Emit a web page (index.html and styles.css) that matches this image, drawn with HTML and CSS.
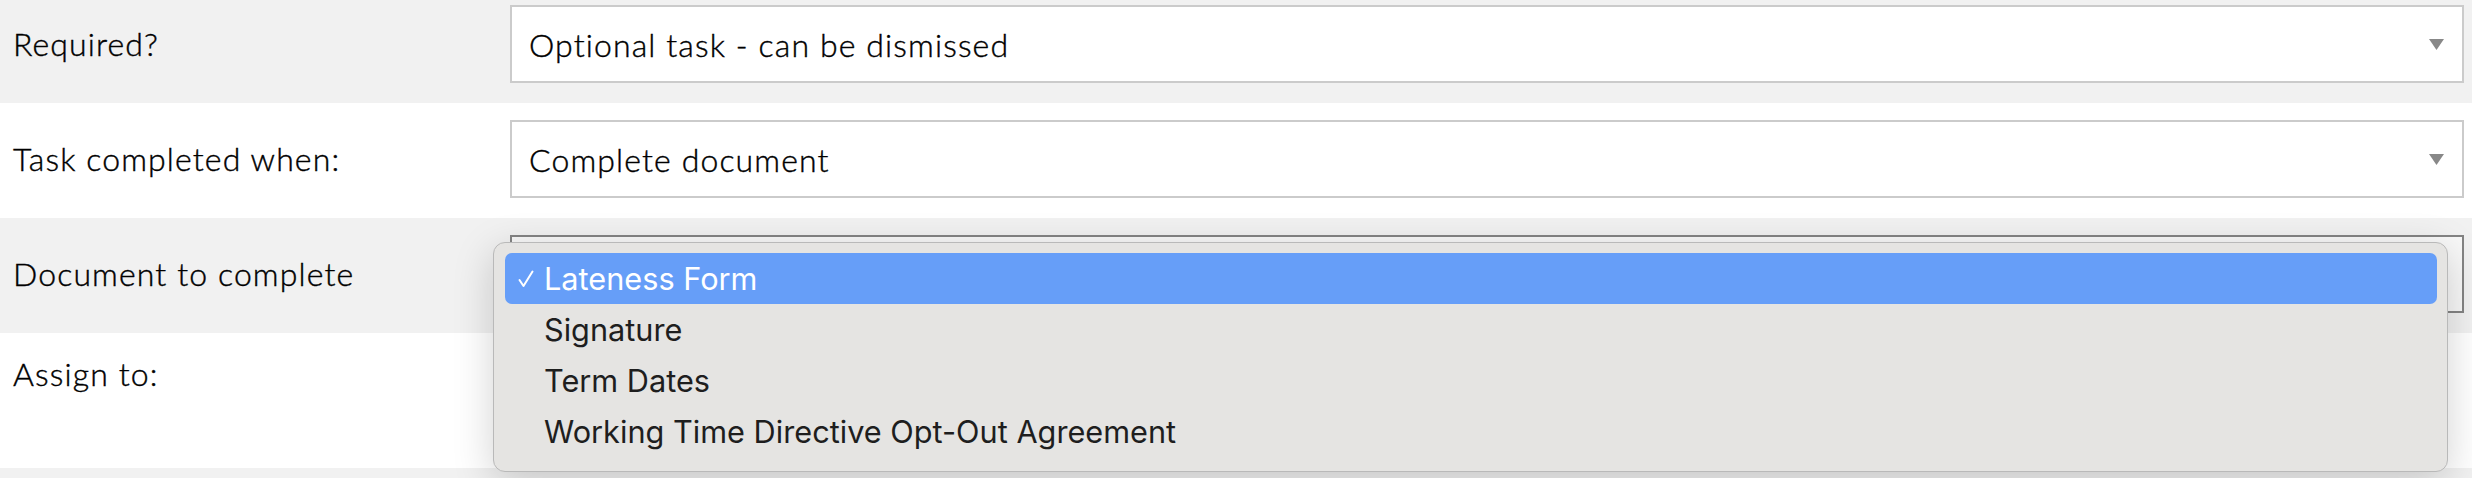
FILE: index.html
```html
<!doctype html>
<html>
	<head>
		<title>Task settings</title>
		<meta name="viewport" content="width=device-width, initial-scale=1.0">
		<link rel="stylesheet" href="styles.css">
	</head>
	<body>

		<!--	Task settings form.	-->
		<div class="taskForm">

			<div class="formRow shaded firstRow">
				<div class="rowLabel">Required?</div>
				<div class="rowField">
					<div class="selectBox">
						<span class="selectText">Optional task - can be dismissed</span>
						<svg class="selectArrow" width="15" height="11" viewBox="0 0 15 11"><polygon points="0,0 15,0 7.5,11" fill="#888"/></svg>
					</div>
				</div>
			</div>

			<div class="formRow">
				<div class="rowLabel">Task completed when:</div>
				<div class="rowField">
					<div class="selectBox">
						<span class="selectText">Complete document</span>
						<svg class="selectArrow" width="15" height="11" viewBox="0 0 15 11"><polygon points="0,0 15,0 7.5,11" fill="#888"/></svg>
					</div>
				</div>
			</div>

			<div class="formRow shaded">
				<div class="rowLabel">Document to complete</div>
				<div class="rowField">
					<!--	The select itself, hidden under its open list.	-->
					<div class="selectBox isOpen"></div>

					<!--	The open option list.	-->
					<ul class="optionMenu">
						<li class="optionItem isSelected">
							<svg class="optionCheck" width="18" height="18" viewBox="0 0 18 18"><polyline points="2.5,10 6.5,16 15.5,1.5" fill="none" stroke="#fff" stroke-width="2" stroke-linecap="round" stroke-linejoin="round"/></svg>
							Lateness Form
						</li>
						<li class="optionItem">Signature</li>
						<li class="optionItem">Term Dates</li>
						<li class="optionItem">Working Time Directive Opt-Out Agreement</li>
					</ul>
				</div>
			</div>

			<div class="formRow topAligned">
				<div class="rowLabel">Assign to:</div>
				<div class="rowField"></div>
			</div>

			<div class="formRow shaded lastRow"></div>

		</div>

	</body>
</html>
```

FILE: styles.css
```css
html, body {
	margin: 0;
	padding: 0;
	background-color: #ffffff;
	font-family: "Lato", "Liberation Sans", sans-serif;
	color: #000000;
}

.taskForm {
	width: 100%;
}

.formRow {
	display: grid;
	grid-template-columns: 510px 1fr;
	align-items: center;
	padding: 17px 8px 20px 0;
	background-color: #ffffff;
}

.shaded {
	background-color: #f1f1f1;
}

.firstRow {
	padding-top: 5px;
}

.topAligned {
	align-items: start;
	padding-top: 21px;
	box-sizing: border-box;
	height: 135px;
}

.lastRow {
	padding: 0;
	height: 10px;
}

.rowLabel {
	padding-left: 13px;
	font-size: 32px;
	font-weight: 300;
	line-height: 40px;
	letter-spacing: 0.035em;
	-webkit-text-stroke: 0.4px #000;
}

.rowField {
	position: relative;
}

.selectBox {
	display: flex;
	align-items: center;
	justify-content: space-between;
	height: 78px;
	box-sizing: border-box;
	border: 2px solid #cbcbcb;
	background-color: #ffffff;
	padding: 0 18px 0 17px;
}

.selectText {
	font-size: 32px;
	font-weight: 300;
	letter-spacing: 0.035em;
	-webkit-text-stroke: 0.4px #000;
}

.selectBox.isOpen {
	border-color: #848484;
	background-color: #f8f8f8;
}

/*	Open option list, drawn over the rows below.	*/
.optionMenu {
	position: absolute;
	top: 7px;
	left: -17px;
	right: 16px;
	margin: 0;
	padding: 10px 10px 14px 11px;
	list-style: none;
	background-color: #e5e4e2;
	border: 1px solid #b9b9b9;
	border-radius: 12px;
	box-shadow: 0 10px 40px rgba(0, 0, 0, 0.18);
	font-family: "Inter", "Roboto", sans-serif;
	font-size: 30.7px;
	color: #1e1e1e;
	z-index: 2;
}

.optionItem {
	position: relative;
	height: 51px;
	line-height: 51px;
	padding-left: 39px;
	border-radius: 7px;
}

.optionItem.isSelected {
	background-color: #669ef8;
	color: #ffffff;
}

.optionCheck {
	position: absolute;
	left: 12px;
	top: 17px;
}
```
